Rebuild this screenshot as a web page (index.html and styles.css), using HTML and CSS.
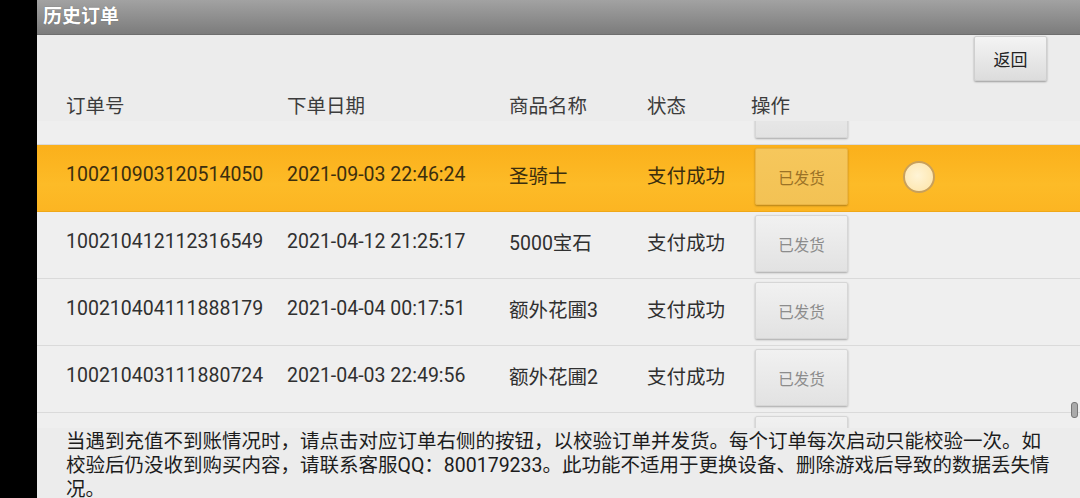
FILE: index.html
```html
<!DOCTYPE html>
<html>
<head>
    <meta charset="utf-8">
    <title>历史订单</title>
    <link rel="stylesheet" href="styles.css">
</head>
<body>
    <div class="screen">
        <div class="titlebar">历史订单</div>

        <div class="toolbar">
            <button class="back-btn">返回</button>
        </div>

        <div class="order-head">
            <span>订单号</span>
            <span>下单日期</span>
            <span>商品名称</span>
            <span>状态</span>
            <span>操作</span>
        </div>

        <div class="order-list">
            <div class="rows">
                <div class="order-row">
                    <span>100210915101722318</span>
                    <span>2021-09-15 10:17:22</span>
                    <span>元宝</span>
                    <span>支付成功</span>
                    <button class="ship-btn">已发货</button>
                </div>
                <div class="order-row selected">
                    <span>100210903120514050</span>
                    <span>2021-09-03 22:46:24</span>
                    <span>圣骑士</span>
                    <span>支付成功</span>
                    <button class="ship-btn">已发货</button>
                    <span class="radio"></span>
                </div>
                <div class="order-row">
                    <span>100210412112316549</span>
                    <span>2021-04-12 21:25:17</span>
                    <span>5000宝石</span>
                    <span>支付成功</span>
                    <button class="ship-btn">已发货</button>
                </div>
                <div class="order-row">
                    <span>100210404111888179</span>
                    <span>2021-04-04 00:17:51</span>
                    <span>额外花圃3</span>
                    <span>支付成功</span>
                    <button class="ship-btn">已发货</button>
                </div>
                <div class="order-row">
                    <span>100210403111880724</span>
                    <span>2021-04-03 22:49:56</span>
                    <span>额外花圃2</span>
                    <span>支付成功</span>
                    <button class="ship-btn">已发货</button>
                </div>
                <div class="order-row">
                    <span>100210402111870315</span>
                    <span>2021-04-02 20:31:08</span>
                    <span>额外花圃1</span>
                    <span>支付成功</span>
                    <button class="ship-btn">已发货</button>
                </div>
            </div>
        </div>

        <p class="notice">当遇到充值不到账情况时，请点击对应订单右侧的按钮，以校验订单并发货。每个订单每次启动只能校验一次。如<br>校验后仍没收到购买内容，请联系客服QQ：800179233。此功能不适用于更换设备、删除游戏后导致的数据丢失情<br>况。</p>

        <div class="scroll-thumb"></div>
    </div>
</body>
</html>
```

FILE: styles.css
```css
html, body {
    height: 100%;
    margin: 0;
    padding: 0;
}

body {
    background: #000;
    display: flex;
    font-family: Roboto, "Noto Sans CJK SC", sans-serif;
    overflow: hidden;
}

.screen {
    position: relative;
    flex: 1;
    margin-left: 37px;
    height: 498px;
    background: #ececec;
    overflow: hidden;
}

.titlebar {
    height: 34px;
    line-height: 34px;
    padding-left: 6px;
    background: linear-gradient(#a2a2a2, #7c7c7c);
    border-bottom: 1px solid #6e6e6e;
    color: #fff;
    font-size: 19px;
    font-weight: bold;
    text-shadow: 0 0 1px rgba(0, 0, 0, 0.4);
}

.toolbar {
    display: flex;
    justify-content: flex-end;
    padding: 1px 33px 0 0;
}

.back-btn {
    width: 73px;
    height: 45px;
    background: linear-gradient(#f4f4f4, #dcdcdc);
    border: 1px solid #cfcfcf;
    border-radius: 2px;
    box-shadow: 0 1px 2px rgba(0, 0, 0, 0.35);
    color: #222;
    font-family: "Noto Sans CJK SC", sans-serif;
    font-size: 17px;
    padding: 0;
}

.order-head,
.order-row {
    display: grid;
    grid-template-columns: 221px 222px 138px 108px 93px 55px 32px;
    align-items: center;
    padding-left: 29px;
    font-size: 19.5px;
}

.order-head {
    height: 29px;
    margin-top: 11px;
    line-height: 29px;
    color: #3c3c3c;
}

.order-head span:nth-child(5) {
    margin-left: -4px;
}

.order-list {
    height: 307px;
    overflow: hidden;
}

.rows {
    margin-top: -43px;
}

.order-row {
    height: 66px;
    border-bottom: 1px solid #dadada;
    background: #efefef;
    color: #303030;
}

.order-row > span {
    margin-top: -8px;
}

.ship-btn {
    grid-column: 5;
    height: 57px;
    margin-top: -3px;
    background: linear-gradient(#f1f1f1, #e2e2e2);
    border: 1px solid #d6d6d6;
    border-radius: 2px;
    box-shadow: 0 1px 2px rgba(0, 0, 0, 0.3);
    color: #8c8c8c;
    font-family: "Noto Sans CJK SC", sans-serif;
    font-size: 15.5px;
    padding: 0;
}

.order-row.selected {
    background: linear-gradient(#fbb01b, #fdbb27 60%, #fcb522);
    border-bottom-color: #f0a818;
    color: #3b2e0e;
}

.order-row.selected .ship-btn {
    background: linear-gradient(#f6c75c, #f3c254);
    border-color: #eab445;
    color: #9b7226;
}

.order-row.selected .radio {
    grid-column: 7;
    margin-top: -2px;
    width: 28px;
    height: 28px;
    border: 2px solid #c8a05c;
    border-radius: 50%;
    background: radial-gradient(circle at 45% 45%, #fff4d6, #fde3a6);
}

.notice {
    margin: 2px 0 0;
    padding-left: 29px;
    font-size: 19.5px;
    line-height: 24px;
    color: #1c1c1c;
}

.scroll-thumb {
    position: absolute;
    right: 2px;
    top: 402px;
    width: 5px;
    height: 14px;
    border: 1px solid #777;
    border-radius: 3px;
    background: #aaa;
}
```
